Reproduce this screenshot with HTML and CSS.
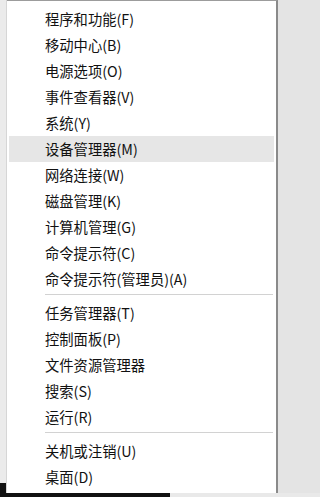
FILE: index.html
```html
<!DOCTYPE html>
<html lang="zh-CN">
<head>
<meta charset="utf-8">
<title>Win+X 菜单</title>
<link rel="stylesheet" href="styles.css">
</head>
<body>
<div class="screen">
  <div class="main">
    <div class="strip"></div>
    <div class="menu">
      <div class="item">程序和功能(F)</div>
      <div class="item">移动中心(B)</div>
      <div class="item">电源选项(O)</div>
      <div class="item">事件查看器(V)</div>
      <div class="item">系统(Y)</div>
      <div class="item active">设备管理器(M)</div>
      <div class="item">网络连接(W)</div>
      <div class="item">磁盘管理(K)</div>
      <div class="item">计算机管理(G)</div>
      <div class="item">命令提示符(C)</div>
      <div class="item">命令提示符(管理员)(A)</div>
      <div class="sep"></div>
      <div class="item">任务管理器(T)</div>
      <div class="item">控制面板(P)</div>
      <div class="item">文件资源管理器</div>
      <div class="item">搜索(S)</div>
      <div class="item">运行(R)</div>
      <div class="sep"></div>
      <div class="item">关机或注销(U)</div>
      <div class="item">桌面(D)</div>
    </div>
    <div class="side"></div>
  </div>
  <div class="taskbar">
    <div class="taskbar-dark"></div>
    <div class="taskbar-light"></div>
  </div>
</div>
</body>
</html>
```
FILE: styles.css
```css
html, body {
  margin: 0;
  padding: 0;
  background: #e4e4e4;
}
body {
  height: 497px;
  overflow: hidden;
  font-family: "Noto Sans CJK SC", "Noto Sans", sans-serif;
}
.screen {
  display: flex;
  flex-direction: column;
  height: 497px;
}
.main {
  display: flex;
  flex: 1;
  min-height: 0;
}
.strip {
  width: 7px;
  background: linear-gradient(to bottom, #ebebeb 0, #ebebeb 483px, #111 483px);
  border-right: 1px solid #d6d6d6;
  box-sizing: border-box;
}
.menu {
  width: 271px;
  box-sizing: border-box;
  background: #fff;
  border-top: 1px solid #9c9c9c;
  border-right: 2px solid #8a8a8a;
  padding: 5px 2px 3px 2px;
  display: flex;
  flex-direction: column;
}
.item {
  height: 26px;
  line-height: 26px;
  padding-left: 36px;
  font-size: 14.3px;
  color: #111;
  white-space: nowrap;
}
.item.active {
  background: #e6e6e6;
}
.sep {
  height: 8px;
  box-sizing: border-box;
  padding-top: 2px;
  margin-left: 36px;
  margin-right: 1px;
}
.sep::before {
  content: "";
  display: block;
  height: 1px;
  background: #d2d2d2;
}
.side {
  flex: 1;
  background: #e4e4e4;
}
.taskbar {
  height: 4px;
  display: flex;
}
.taskbar-dark {
  width: 170px;
  background: #111;
}
.taskbar-light {
  flex: 1;
  background: #e9e9e9;
}
```
